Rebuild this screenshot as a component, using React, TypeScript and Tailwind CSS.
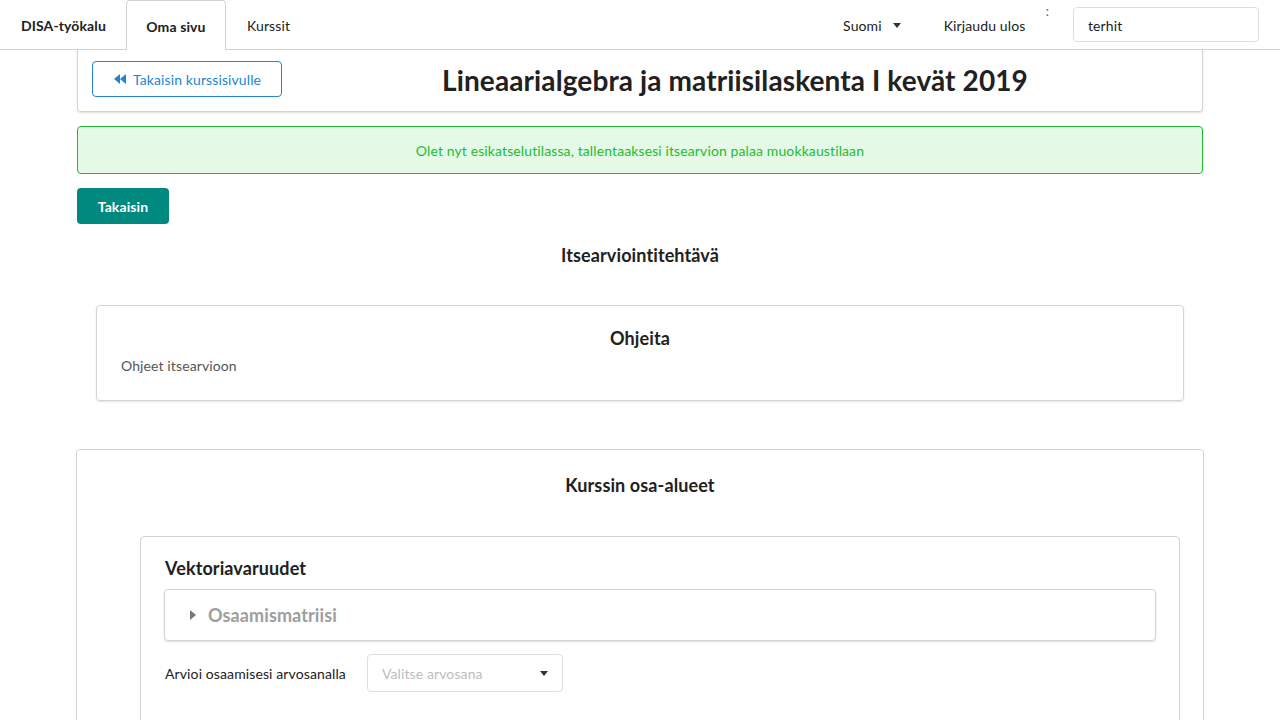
function Caret({ className = "" }: { className?: string }) {
  return (
    <svg width="8" height="5" viewBox="0 0 8 5" className={className}>
      <path d="M0 0 L8 0 L4 5 Z" fill="currentColor" />
    </svg>
  );
}

function NavBar() {
  return (
    <div className="flex h-[50px] items-stretch border-b border-[#d4d4d5] bg-white text-[14px] text-[#212121]">
      <div className="flex items-center pt-[2px] pr-[20px] pl-[21px] font-bold">DISA-työkalu</div>
      <div className="flex h-[50px] w-[100px] items-center justify-center rounded-t-[4px] border border-b-0 border-[#d4d4d5] bg-white pt-[2px] font-bold">
        Oma sivu
      </div>
      <div className="flex items-center px-[21px] pt-[2px]">Kurssit</div>
      <div className="flex-1" />
      <div className="flex items-center gap-[11px] pt-[2px] pr-[25px]">
        Suomi
        <Caret className="text-[#333]" />
      </div>
      <div className="flex items-center pt-[2px] pr-[20px] pl-[18px]">Kirjaudu ulos</div>
      <div className="flex items-start pr-[2px] text-[#2185d0]">:</div>
      <div className="flex items-center pl-[22px] pr-[21px]">
        <div className="flex h-[35px] w-[186px] items-center rounded-[4px] border border-[#dededf] px-[14px] pt-[1px]">
          terhit
        </div>
      </div>
    </div>
  );
}

export default function App() {
  return (
    <div className="min-h-[720px] bg-white font-['Lato','Open_Sans',sans-serif] text-[14px] tracking-[0.008em] text-[#212121]">
      <NavBar />
      <div className="mx-auto w-[1126px]">
        <div className="flex items-center rounded-b-[4px] border border-t-0 border-[#d4d4d5] px-[14px] pt-[11px] pb-[14px] shadow-[0_1px_2px_rgba(34,36,38,0.15)]">
          <button className="flex h-[36px] w-[190px] items-center justify-center gap-[6px] rounded-[4px] border border-[#2185d0] text-[14px] text-[#2185d0]">
            <svg width="14" height="10" viewBox="0 0 14 10">
              <path d="M7 0 L7 10 L1 5 Z M13 0 L13 10 L7 5 Z" fill="currentColor" />
            </svg>
            Takaisin kurssisivulle
          </button>
          <h1 className="flex-1 pt-[2px] text-center text-[28px] leading-[34px] font-bold text-[#212121]">
            Lineaarialgebra ja matriisilaskenta I kevät 2019
          </h1>
        </div>

        <div className="mt-[14px] flex h-[48px] items-center justify-center rounded-[4px] border border-[#1ebc30] bg-[#e5f9e7] text-[14px] text-[#1ebc30]">
          Olet nyt esikatselutilassa, tallentaaksesi itsearvion palaa muokkaustilaan
        </div>

        <button className="mt-[14px] h-[36px] w-[92px] rounded-[4px] bg-[#00897e] text-[14px] font-bold text-white">
          Takaisin
        </button>

        <h3 className="mt-[19px] text-center text-[18px] leading-[24px] font-bold">Itsearviointitehtävä</h3>

        <div className="mx-[19px] mt-[38px] h-[96px] rounded-[4px] border border-[#d4d4d5] px-[24px] pt-[20px] shadow-[0_1px_2px_rgba(34,36,38,0.12)]">
          <h3 className="text-center text-[18px] leading-[24px] font-bold">Ohjeita</h3>
          <p className="mt-[5px] text-[14px] text-[#555]">Ohjeet itsearvioon</p>
        </div>

        <div className="-mx-[1px] mt-[48px] h-[300px] rounded-[4px] border border-[#d4d4d5] pt-[23px]">
          <h3 className="text-center text-[18px] leading-[24px] font-bold">Kurssin osa-alueet</h3>
          <div className="mt-[39px] mr-[23px] ml-[63px] h-[300px] rounded-[4px] border border-[#d4d4d5] px-[24px] pt-[19px]">
            <h3 className="text-[18px] leading-[24px] font-bold">Vektoriavaruudet</h3>
            <div className="mt-[9px] mr-[-1px] ml-[-1px] flex h-[52px] items-center gap-[12px] rounded-[4px] border border-[#d4d4d5] px-[25px] shadow-[0_1px_2px_rgba(34,36,38,0.15)]">
              <svg width="6" height="10" viewBox="0 0 6 10" className="text-[#777]">
                <path d="M0 0 L6 5 L0 10 Z" fill="currentColor" />
              </svg>
              <span className="text-[18px] font-bold text-[#9e9e9e]">Osaamismatriisi</span>
            </div>
            <div className="mt-[13px] flex items-center gap-[21px]">
              <span className="text-[14px]">Arvioi osaamisesi arvosanalla</span>
              <div className="flex h-[38px] w-[196px] items-center justify-between rounded-[4px] border border-[#dededf] pr-[14px] pl-[14px] text-[14px] text-[#bdbdbd]">
                Valitse arvosana
                <Caret className="text-[#333]" />
              </div>
            </div>
          </div>
        </div>
      </div>
    </div>
  );
}
